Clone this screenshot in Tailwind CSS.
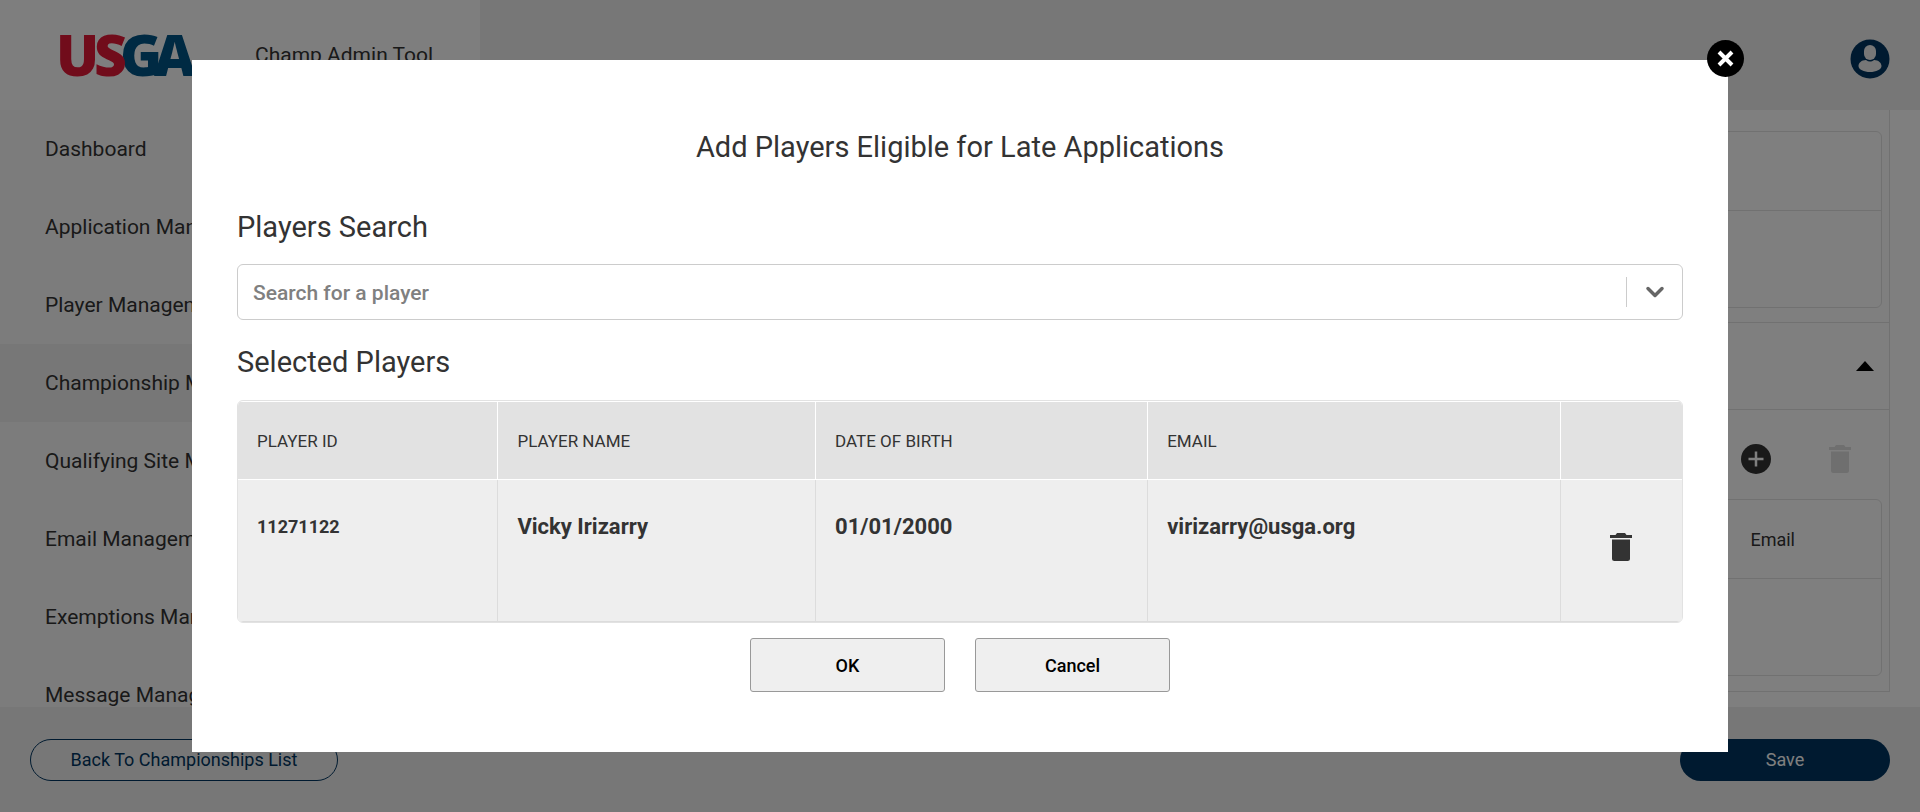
<!DOCTYPE html>
<html lang="en">
<head>
<meta charset="utf-8">
<meta name="viewport" content="width=device-width, initial-scale=1">
<title>Champ Admin Tool</title>
<script src="https://cdn.jsdelivr.net/npm/@tailwindcss/browser@4"></script>
</head>
<body class="font-['Roboto','Noto_Sans',sans-serif] text-[#333] bg-white">
<div class="flex h-screen flex-col overflow-hidden">
  <header class="flex h-[110px] shrink-0 bg-[#efefef]">
    <div class="flex w-[480px] items-center bg-[#fdfdfd] pl-[59px] pt-[2px]">
      <svg class="h-[60px] w-[142px]" viewBox="0 0 142 60" role="img" aria-label="USGA" font-family="Noto Sans, sans-serif" font-weight="900" font-size="57">
        <text x="61" y="50" fill="#005587">G</text>
        <text x="95" y="50" fill="#005587">A</text>
        <text x="-3" y="50" fill="#e31837">U</text>
        <text x="35" y="50" fill="#e31837">S</text>
      </svg>
      <span class="ml-[54px] text-[21px]">Champ Admin Tool</span>
    </div>
    <div class="flex flex-1 items-center justify-end pr-[30px]">
      <button class="mt-[8px]" aria-label="Account">
        <svg class="h-10 w-10" viewBox="0 0 40 40"><circle cx="20" cy="20" r="19.5" fill="#003560"/><rect x="14" y="6" width="12" height="15" rx="6" fill="#efefef"/><path d="M8.500 27c0-3 3-6 7.500-6 2.500 2 5.500 2 8 0 4.500 0 7.500 3 7.500 6 0 3.500-5.500 6-11.500 6S8.500 30.500 8.500 27z" fill="#efefef"/></svg>
      </button>
    </div>
  </header>
  <div class="flex min-h-0 flex-1">
    <nav class="w-[480px] shrink-0 overflow-hidden bg-[#f9f9f9] text-[21px]">
      <a href="#" class="flex h-[78px] items-center pl-[45px] pt-[2px]">Dashboard</a>
      <a href="#" class="flex h-[78px] items-center pl-[45px] pt-[2px]">Application Management</a>
      <a href="#" class="flex h-[78px] items-center pl-[45px] pt-[2px]">Player Management</a>
      <a href="#" class="flex h-[78px] items-center bg-[#efefef] pl-[45px] pt-[2px]">Championship Management</a>
      <a href="#" class="flex h-[78px] items-center pl-[45px] pt-[2px]">Qualifying Site Management</a>
      <a href="#" class="flex h-[78px] items-center pl-[45px] pt-[2px]">Email Management</a>
      <a href="#" class="flex h-[78px] items-center pl-[45px] pt-[2px]">Exemptions Management</a>
      <a href="#" class="flex h-[78px] items-center pl-[45px] pt-[2px]">Message Management</a>
    </nav>
    <main class="flex-1 overflow-hidden pr-[30px] pl-[30px]">
      <div class="border-x border-b border-[#e2e2e2]">
        <section class="px-[7px] pt-[21px] pb-[14px]">
          <div class="h-[177px] rounded-md border border-[#e2e2e2]"><div class="h-[79px] border-b border-[#e2e2e2]"></div></div>
        </section>
        <div class="flex h-[88px] items-center justify-end border-y border-[#e2e2e2] pr-[15px]">
          <button aria-label="Collapse section"><svg class="h-[10px] w-[18px]" viewBox="0 0 18 10"><path d="M0 10 9 0l9 10z" fill="#000"/></svg></button>
        </div>
        <section class="px-[7px] pb-[15px]">
          <div class="flex h-[89px] items-center justify-end gap-[57px] pt-[8px] pr-[31px]">
            <button aria-label="Add"><svg class="h-[32px] w-[32px]" viewBox="0 0 32 32"><circle cx="16" cy="16" r="15" fill="#333"/><path d="M16 8.500v15M8.500 16h15" stroke="#fff" stroke-width="2.500"/></svg></button>
            <button aria-label="Delete" disabled><svg class="h-7 w-[22px]" viewBox="0 0 22 28" fill="#dedede"><path d="M0 2h5.500L7 0h8l1.500 2H22v3H0zM2 6.500h18v19a2.500 2.500 0 0 1-2.500 2.500h-13A2.500 2.500 0 0 1 2 25.500z"/></svg></button>
          </div>
          <div class="h-[177px] rounded-md border border-[#e2e2e2]">
            <div class="flex h-[79px] items-center justify-end border-b border-[#e2e2e2] pt-[2px] pr-[86px] text-lg">Email</div>
          </div>
        </section>
      </div>
    </main>
  </div>
  <footer class="flex h-[105px] shrink-0 items-center justify-between bg-[#efefef] px-[30px] text-lg">
    <button class="h-[42px] w-[308px] rounded-full border border-[#003560] text-[#003560]">Back To Championships List</button>
    <button class="h-[42px] w-[210px] rounded-full bg-[#003560] text-white">Save</button>
  </footer>
</div>

<div class="fixed inset-0 bg-black/50 pt-[60px]">
  <div role="dialog" aria-modal="true" aria-labelledby="dialog-title" class="relative mx-auto w-4/5 bg-white px-[45px] pt-[67px] pb-[60px]">
    <button aria-label="Close" class="absolute -top-[20px] -right-[17px]">
      <svg class="h-[38px] w-[38px]" viewBox="0 0 38 38"><circle cx="18.500" cy="18.500" r="18.500" fill="#000"/><path d="m12 12 13 13m0-13-13 13" stroke="#fff" stroke-width="4"/></svg>
    </button>
    <h1 id="dialog-title" class="text-center text-[29px] leading-10">Add Players Eligible for Late Applications</h1>
    <label for="player" class="mt-10 block text-[29px] leading-10">Players Search</label>
    <div class="mt-[17px] flex h-[56px] items-center rounded-md border border-[#ccc]">
      <input id="player" type="text" placeholder="Search for a player" class="h-full min-w-0 flex-1 px-[15px] pt-[2px] text-[21px] font-medium outline-none placeholder:text-[#808080]">
      <span class="h-[30px] w-px bg-[#ccc]"></span>
      <button aria-label="Show players" class="flex h-full w-[55px] items-center justify-center"><svg class="h-3 w-5" viewBox="0 0 20 12" fill="none" stroke="#666" stroke-width="3.500" stroke-linecap="round" stroke-linejoin="round"><path d="m3 2.500 7 7 7-7"/></svg></button>
    </div>
    <h2 class="mt-[22px] text-[29px] leading-10">Selected Players</h2>
    <div class="mt-[18px] overflow-hidden rounded-md border border-[#e2e2e2] pt-px">
      <table class="w-full table-fixed border-collapse text-left">
        <thead>
          <tr class="h-[77px] border-b border-white bg-[#e2e2e2] text-[17px]">
            <th class="w-[18%] border-r border-white pt-[2px] pl-[19px] font-normal">PLAYER ID</th>
            <th class="w-[22%] border-r border-white pt-[2px] pl-[19px] font-normal">PLAYER NAME</th>
            <th class="w-[23%] border-r border-white pt-[2px] pl-[19px] font-normal">DATE OF BIRTH</th>
            <th class="border-r border-white pt-[2px] pl-[19px] font-normal">EMAIL</th>
            <th class="w-[122px]" aria-label="Actions"></th>
          </tr>
        </thead>
        <tbody>
          <tr class="h-[142px] border-b border-[#dcdcdc] bg-[#eee] align-top text-[22px] leading-7 font-bold">
            <td class="border-r border-[#dcdcdc] pt-[33px] pl-[19px] text-lg leading-7">11271122</td>
            <td class="border-r border-[#dcdcdc] pt-[33px] pl-[19px]">Vicky Irizarry</td>
            <td class="border-r border-[#dcdcdc] pt-[33px] pl-[19px]">01/01/2000</td>
            <td class="border-r border-[#dcdcdc] pt-[33px] pl-[19px]">virizarry@usga.org</td>
            <td class="pt-[53px] text-center"><button aria-label="Delete Vicky Irizarry" class="block w-full"><svg class="mx-auto h-7 w-[22px]" viewBox="0 0 22 28" fill="#333"><path d="M0 2h5.500L7 0h8l1.500 2H22v3H0zM2 6.500h18v19a2.500 2.500 0 0 1-2.500 2.500h-13A2.500 2.500 0 0 1 2 25.500z"/></svg></button></td>
          </tr>
        </tbody>
      </table>
    </div>
    <div class="mt-[15px] flex justify-center gap-[30px] text-lg font-medium text-black">
      <button class="h-[54px] w-[195px] rounded-[3px] border border-[#999] bg-[#efefef] pt-[2px]">OK</button>
      <button class="h-[54px] w-[195px] rounded-[3px] border border-[#999] bg-[#efefef] pt-[2px]">Cancel</button>
    </div>
  </div>
</div>
</body>
</html>
